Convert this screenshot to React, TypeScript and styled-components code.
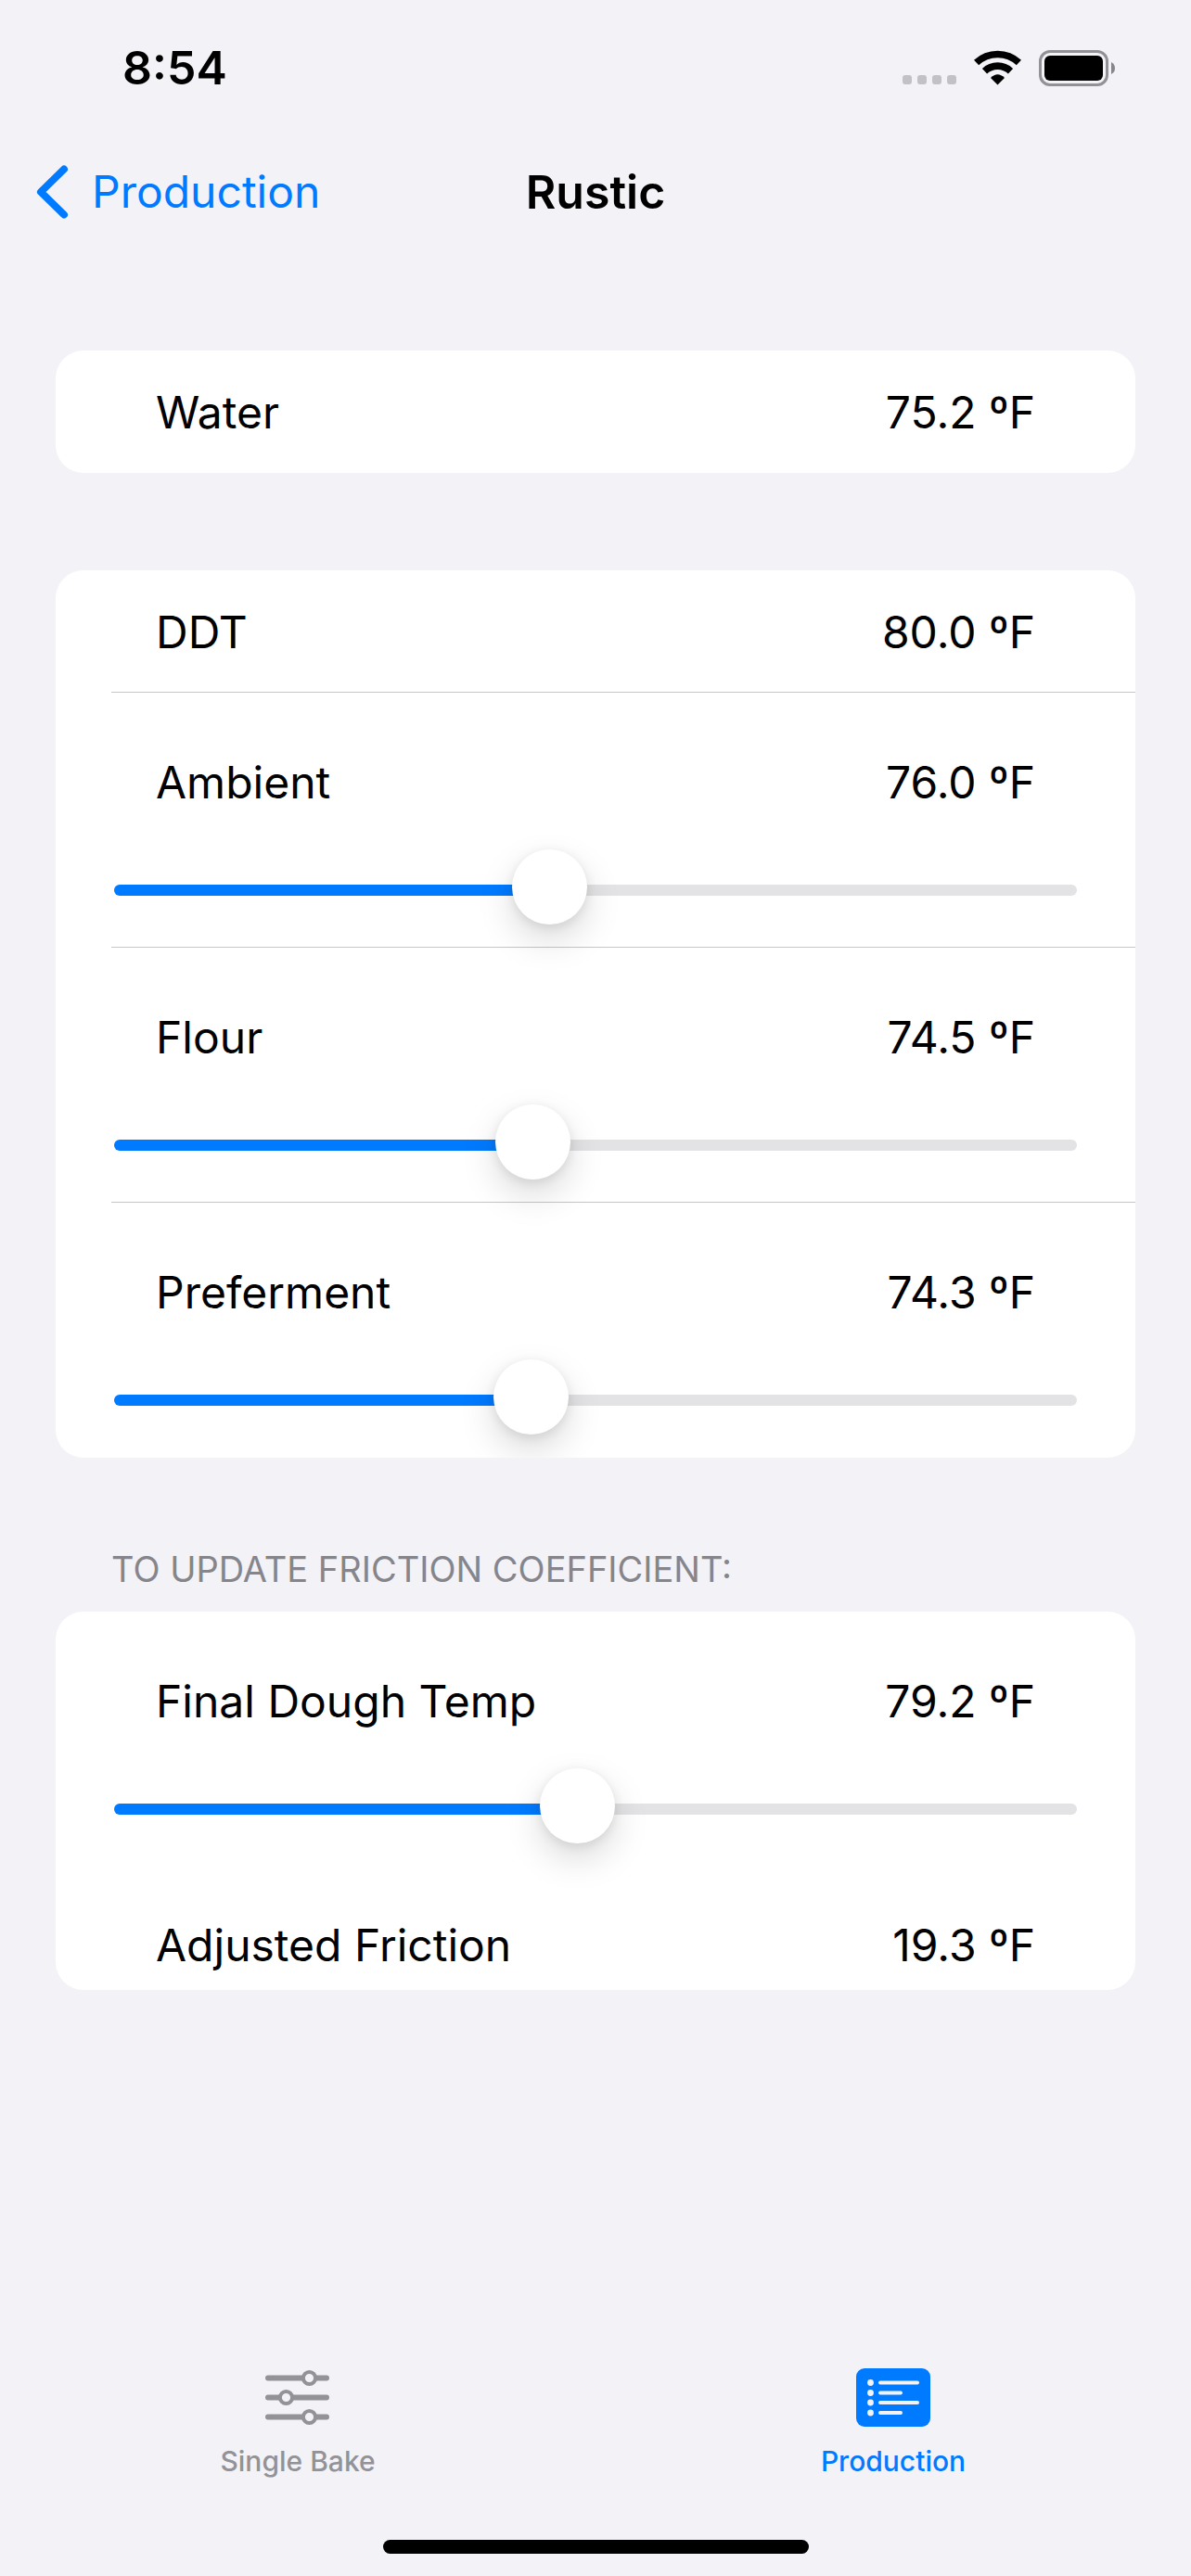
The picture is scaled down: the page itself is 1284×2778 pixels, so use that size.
import { useId, useState } from "react";
import styled, { createGlobalStyle } from "styled-components";

const color = {
  page: "#f2f2f7",
  card: "#ffffff",
  text: "#000000",
  tint: "#007aff",
  track: "#e3e3e5",
  line: "#c6c6c8",
  header: "#85858b",
  inactive: "#929297",
};

const GlobalStyle = createGlobalStyle`
  *, *::before, *::after { box-sizing: border-box; }
  body {
    margin: 0;
    background: ${color.page};
    color: ${color.text};
    font-family: Inter, "Liberation Sans", sans-serif;
    font-size: 48px;
    line-height: 62px;
  }
`;

const Screen = styled.div`
  display: flex;
  flex-direction: column;
  min-height: 100vh;
`;

const StatusBar = styled.div`
  display: flex;
  justify-content: space-between;
  align-items: center;
  height: 146px;
  padding: 0 82px 0 132px;
`;

const Time = styled.time`
  font-size: 50px;
  font-weight: 600;
`;

const StatusIcons = styled.div`
  display: flex;
  align-items: center;
  gap: 19px;
`;

const NavBar = styled.header`
  display: grid;
  grid-template-columns: 1fr auto 1fr;
  align-items: center;
  height: 122px;
  padding: 0 39px;
`;

const BackLink = styled.a`
  display: flex;
  align-items: center;
  gap: 25px;
  color: ${color.tint};
  text-decoration: none;
`;

const Title = styled.h1`
  margin: 0;
  font-size: 50px;
  font-weight: 600;
`;

const Main = styled.main`
  flex: 1;
  padding: 110px 60px 0;
`;

const Card = styled.section`
  overflow: hidden;
  border-radius: 30px;
  background: ${color.card};

  & + & {
    margin-top: 105px;
  }
`;

const SectionTitle = styled.h2`
  margin: 92px 0 18px;
  padding: 0 60px;
  color: ${color.header};
  font-size: 38px;
  font-weight: 400;
  line-height: 56px;
  text-transform: uppercase;
`;

const Item = styled.div<{ $divided?: boolean }>`
  &::after {
    content: "";
    display: block;
    height: 1px;
    margin-left: 60px;
    background: ${(p) => (p.$divided ? color.line : "transparent")};
  }
`;

const Line = styled.div<{ $top: number; $bottom: number }>`
  display: flex;
  justify-content: space-between;
  padding: ${(p) => p.$top}px 108px ${(p) => p.$bottom}px;
`;

const SliderBox = styled.div`
  padding: 0 63px 19px;
`;

const Range = styled.input`
  display: block;
  width: 100%;
  height: 84px;
  margin: 0;
  appearance: none;
  background: transparent;
  cursor: pointer;

  &::-webkit-slider-runnable-track {
    height: 12px;
    border-radius: 6px;
    background: linear-gradient(
      to right,
      ${color.tint} var(--filled),
      ${color.track} var(--filled)
    );
  }

  &::-webkit-slider-thumb {
    appearance: none;
    width: 81px;
    height: 81px;
    margin-top: -38px;
    border-radius: 50%;
    background: ${color.card};
    box-shadow:
      0 16px 38px rgba(0, 0, 0, 0.15),
      0 3px 12px rgba(0, 0, 0, 0.09);
  }
`;

const TabBar = styled.nav`
  display: grid;
  grid-template-columns: 1fr 1fr;
  height: 185px;
`;

const Tab = styled.a<{ $active?: boolean }>`
  display: flex;
  flex-direction: column;
  align-items: center;
  gap: 18px;
  color: ${(p) => (p.$active ? color.tint : color.inactive)};
  font-size: 30px;
  font-weight: 500;
  line-height: 36px;
  text-decoration: none;
`;

const HomeIndicator = styled.div`
  width: 459px;
  height: 15px;
  margin: 0 auto 24px;
  border-radius: 8px;
  background: ${color.text};
`;

function CellularDots() {
  return (
    <svg width="58" height="38" viewBox="0 0 58 38" fill="#c2c1c6" aria-hidden="true">
      {[0, 16, 32, 48].map((x) => (
        <rect key={x} x={x} y="27" width="10" height="10" rx="3" />
      ))}
    </svg>
  );
}

function WifiIcon() {
  return (
    <svg width="51" height="38" viewBox="0 0 51 38" aria-hidden="true">
      <path d="M2.6 13.6A33.500 33.500 0 0 1 48.400 13.600" fill="none" stroke="#000" strokeWidth="7.600" />
      <path d="M11.500 22.700A20.500 20.500 0 0 1 39.500 22.700" fill="none" stroke="#000" strokeWidth="7.600" />
      <path d="M25.500 37.500L18 30Q25.500 22.500 33 30Z" fill="#000" />
    </svg>
  );
}

function BatteryIcon() {
  return (
    <svg width="82" height="39" viewBox="0 0 82 39" aria-hidden="true">
      <rect x="1.500" y="1.500" width="72" height="36" rx="10.500" fill="none" stroke="#929196" strokeWidth="3" />
      <rect x="6" y="6" width="63" height="27" rx="6" fill="#000" />
      <path d="M78 13Q82 15 82 19.500T78 26Z" fill="#87868a" />
    </svg>
  );
}

function ChevronIcon() {
  return (
    <svg width="35" height="58" viewBox="0 0 35 58" aria-hidden="true">
      <path
        d="M30 4.500L5 29L30 53.500"
        fill="none"
        stroke="currentColor"
        strokeWidth="8"
        strokeLinecap="round"
        strokeLinejoin="round"
      />
    </svg>
  );
}

function SlidersIcon() {
  return (
    <svg width="70" height="64" viewBox="0 0 70 64" aria-hidden="true">
      <g stroke="currentColor" strokeLinecap="round" strokeWidth="6">
        <path d="M3 10.500H66M3 31.500H66M3 52.500H66" />
      </g>
      <g stroke="currentColor" strokeWidth="4" fill={color.page}>
        <circle cx="47.500" cy="10.500" r="6.600" />
        <circle cx="22.500" cy="31.500" r="6.600" />
        <circle cx="47.500" cy="52.500" r="6.600" />
      </g>
    </svg>
  );
}

function ListIcon() {
  const rows = [
    { y: 15.5, end: 67 },
    { y: 26.5, end: 49 },
    { y: 37, end: 67 },
    { y: 48, end: 49 },
  ];
  return (
    <svg width="80" height="64" viewBox="0 0 80 64" aria-hidden="true">
      <rect width="80" height="63" rx="9" fill="currentColor" />
      {rows.map(({ y, end }) => (
        <g key={y} fill={color.page} stroke={color.page}>
          <circle cx="15.500" cy={y} r="3.400" stroke="none" />
          <path d={`M26 ${y}H${end - 1}`} strokeWidth="4" strokeLinecap="round" />
        </g>
      ))}
    </svg>
  );
}

const format = (value: number) => `${value.toFixed(1)} ºF`;

type ReadingProps = {
  label: string;
  value: number;
  divided?: boolean;
  top?: number;
  bottom?: number;
};

function Reading({ label, value, divided, top = 36, bottom = 33 }: ReadingProps) {
  return (
    <Item $divided={divided}>
      <Line $top={top} $bottom={bottom}>
        <span>{label}</span>
        <span>{format(value)}</span>
      </Line>
    </Item>
  );
}

type TemperatureProps = {
  label: string;
  initial: number;
  min: number;
  max: number;
  divided?: boolean;
};

function Temperature({ label, initial, min, max, divided }: TemperatureProps) {
  const id = useId();
  const [value, setValue] = useState(initial);
  const filled = ((value - min) / (max - min)) * 100;

  return (
    <Item $divided={divided}>
      <Line $top={66} $bottom={43}>
        <label htmlFor={id}>{label}</label>
        <output htmlFor={id}>{format(value)}</output>
      </Line>
      <SliderBox>
        <Range
          id={id}
          type="range"
          min={min}
          max={max}
          step={0.1}
          value={value}
          onChange={(e) => setValue(Number(e.target.value))}
          style={{ "--filled": `${filled}%` } as React.CSSProperties}
        />
      </SliderBox>
    </Item>
  );
}

export default function App() {
  return (
    <Screen>
      <GlobalStyle />
      <StatusBar>
        <Time>8:54</Time>
        <StatusIcons>
          <CellularDots />
          <WifiIcon />
          <BatteryIcon />
        </StatusIcons>
      </StatusBar>
      <NavBar>
        <BackLink href="#production">
          <ChevronIcon />
          Production
        </BackLink>
        <Title>Rustic</Title>
      </NavBar>
      <Main>
        <Card>
          <Reading label="Water" value={75.2} />
        </Card>
        <Card>
          <Reading label="DDT" value={80} divided />
          <Temperature label="Ambient" initial={76} min={41} max={119} divided />
          <Temperature label="Flour" initial={74.5} min={41} max={119} divided />
          <Temperature label="Preferment" initial={74.3} min={41} max={119} />
        </Card>
        <SectionTitle>To update friction coefficient:</SectionTitle>
        <Card>
          <Temperature label="Final Dough Temp" initial={79.2} min={48} max={113} />
          <Reading label="Adjusted Friction" value={19.3} top={54} bottom={16} />
        </Card>
      </Main>
      <TabBar>
        <Tab href="#single-bake">
          <SlidersIcon />
          Single Bake
        </Tab>
        <Tab href="#production" $active aria-current="page">
          <ListIcon />
          Production
        </Tab>
      </TabBar>
      <HomeIndicator />
    </Screen>
  );
}
